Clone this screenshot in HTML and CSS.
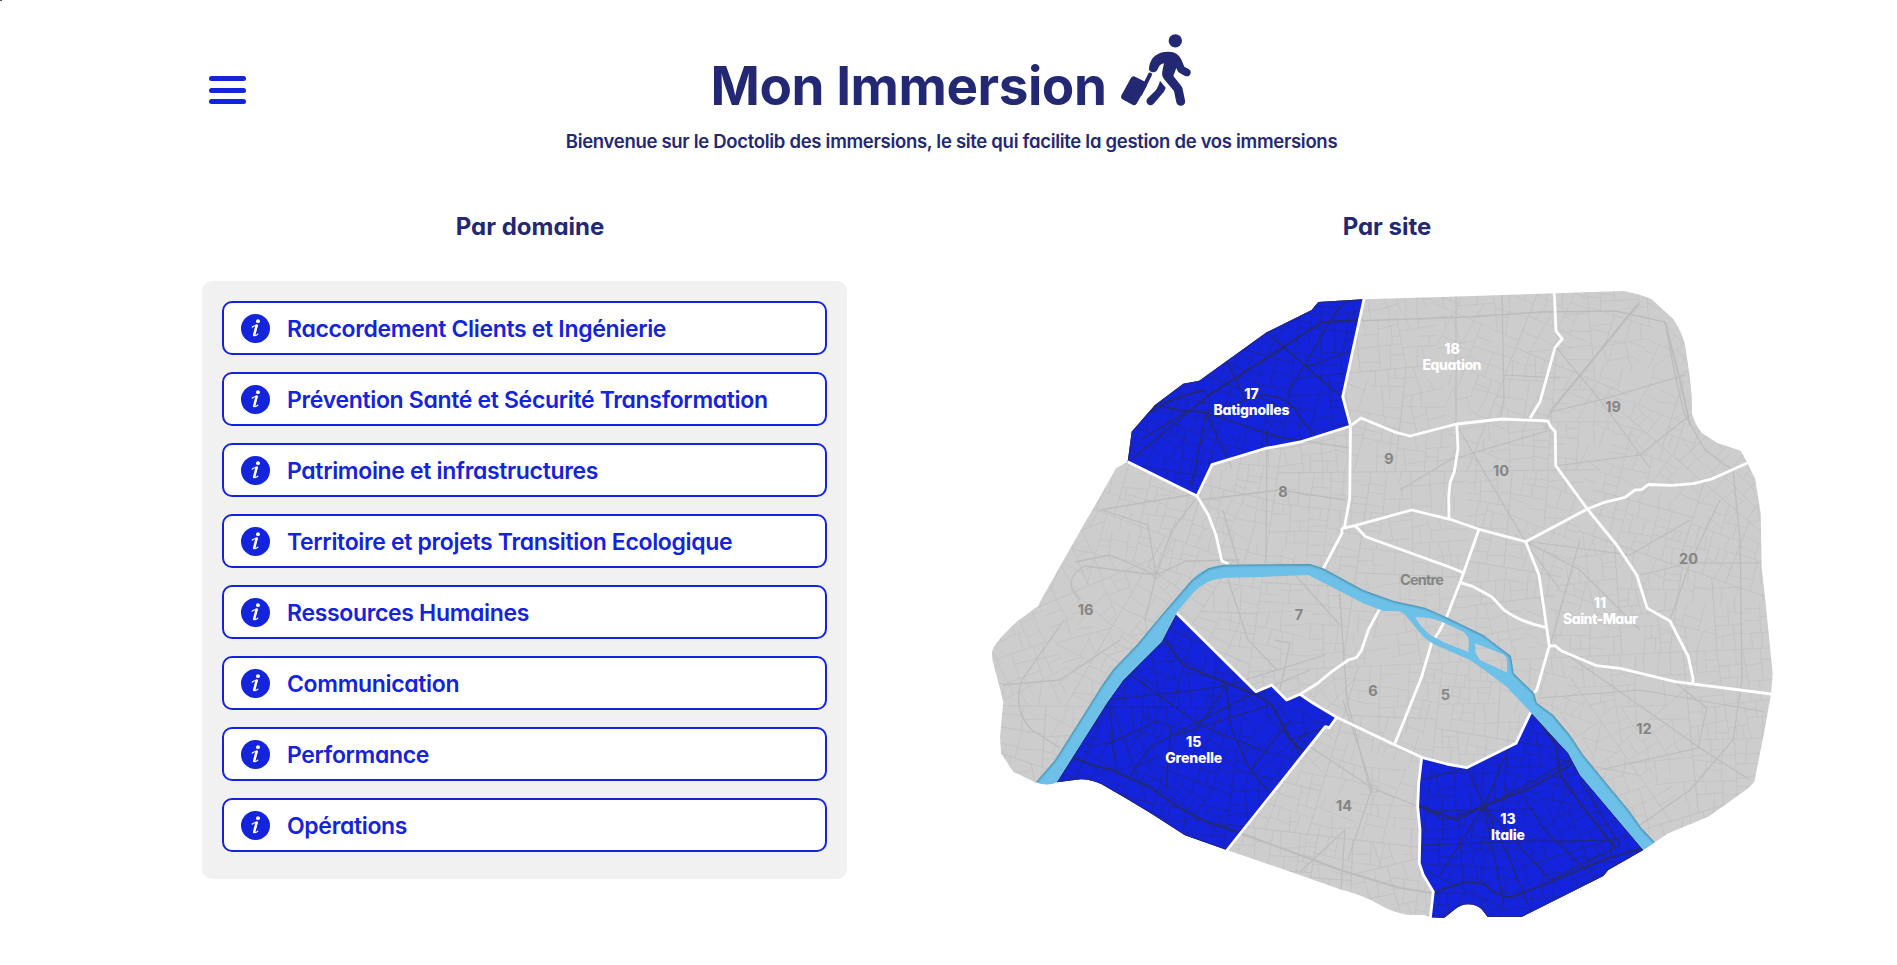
FILE: index.html
```html
<!DOCTYPE html>
<html lang="fr">
<head>
<meta charset="utf-8">
<title>Mon Immersion</title>
<link rel="stylesheet" href="styles.css">
</head>
<body>
<svg class="defs" width="0" height="0" aria-hidden="true">
  <symbol id="info" viewBox="0 0 28 28">
    <circle cx="14" cy="14" r="14" fill="#1423dc"/>
    <circle cx="16.400" cy="6.900" r="1.900" fill="#fff"/>
    <path d="M10.900 12.600Q13 10.900 15.800 10.700L13.100 19.200Q12.700 22.200 16.200 19.500" fill="none" stroke="#fff" stroke-width="1.200" stroke-linecap="round" stroke-linejoin="round"/>
    <path d="M15 11.400L12.700 20.300" stroke="#fff" stroke-width="2.400" stroke-linecap="round"/>
  </symbol>
</svg>
<span class="corner"></span>
<header class="header">
  <button class="burger" aria-label="Menu"><span></span><span></span><span></span></button>
  <div class="brand">
    <h1 class="title"><span class="title-text">Mon Immersion</span>
      <svg class="walker" viewBox="60 38 216 220" fill="#232873" stroke="#232873" stroke-linecap="round" stroke-linejoin="round">
        <circle cx="226" cy="61.500" r="20" stroke="none"/>
        <path d="M101 178L131 193L102 245L73 229Z" stroke-width="19"/>
        <path d="M150 163L121 221" fill="none" stroke-width="12"/>
        <path stroke="none" d="M147 143C150 112 172 94 204 94C226 94 238 103 245 120L253 139L266 146C273 150 274 157 270 163C266 169 260 169 254 166L239 158C235 156 232 151 229 143L220 167L241 193C246 199 248 204 249 211L255 240C257 249 253 254 245 256C237 257 231 254 229 246L222 212L195 180C187 171 185 164 187 153L192 129C181 131 177 137 173 147C170 155 163 157 155 155C149 153 146 149 147 143Z"/>
        <path stroke="none" d="M180 181L197 202C195 209 192 214 188 219L161 250C155 256 148 256 143 251C138 246 138 240 143 234L166 211C173 202 177 193 180 181Z"/>
      </svg>
    </h1>
    <p class="tagline">Bienvenue sur le Doctolib des immersions, le site qui facilite la gestion de vos immersions</p>
  </div>
</header>
<main class="columns">
  <section class="domains">
    <h2 class="heading">Par domaine</h2>
    <ul class="panel">
      <li class="item"><svg class="info"><use href="#info"/></svg><span>Raccordement Clients et Ingénierie</span></li>
      <li class="item"><svg class="info"><use href="#info"/></svg><span>Prévention Santé et Sécurité Transformation</span></li>
      <li class="item"><svg class="info"><use href="#info"/></svg><span>Patrimoine et infrastructures</span></li>
      <li class="item"><svg class="info"><use href="#info"/></svg><span>Territoire et projets Transition Ecologique</span></li>
      <li class="item"><svg class="info"><use href="#info"/></svg><span>Ressources Humaines</span></li>
      <li class="item"><svg class="info"><use href="#info"/></svg><span>Communication</span></li>
      <li class="item"><svg class="info"><use href="#info"/></svg><span>Performance</span></li>
      <li class="item"><svg class="info"><use href="#info"/></svg><span>Opérations</span></li>
    </ul>
  </section>
  <section class="sites">
    <h2 class="heading heading-site">Par site</h2>
    <svg class="map" viewBox="987 280 800 650">
      <defs>
        <path id="city" d="M1127.700 461.700L1131.700 431.700L1155 405L1183.300 383.700L1199.300 380.700L1226.700 361L1266.700 332.300L1311.700 310L1318.300 302L1363.300 299.300L1450 296.700L1555 293.300L1623.300 291Q1640 294 1651.700 299.300L1673.300 319Q1682 332 1685 345L1689.300 373.300L1691.700 395L1692 413.300Q1695 425 1701.700 432.700L1716.700 442.700L1740.700 450.700L1747.300 462.700L1755 478.300L1760.700 513.300L1761.700 568L1766 606.700L1770 646.700L1772.700 673.300L1771 694L1764 733.300L1754.300 781.700L1748.300 788.300L1708.300 816.700L1668.300 833.300L1643.300 850L1608.300 870L1603.300 876L1521.700 917L1487.700 917L1481.700 909.300Q1476 904.300 1468.300 904.300Q1461 904.300 1455 909.300L1444 918L1430.700 917.300L1424 915L1406.700 914.700Q1392 912 1380 905Q1363 895 1340 889.300L1293.300 872.700L1226.700 850L1185 835.300L1150 812.700L1123.300 796.700L1101.700 784.300Q1090 779 1080 779.300L1056.700 782.300Q1050 786 1036 782.700L1013.300 771.700L1001 753.300L1000 736.700L1003.300 701.700L996 673.300Q990 655 993 649Q996 641 1016.700 621.700L1038.300 606L1041 600L1075 540L1100 496.700L1116 468.300Z"/>
        <path id="offices" d="M1127.700 461.700L1131.700 431.700L1155 405L1183.300 383.700L1199.300 380.700L1226.700 361L1266.700 332.300L1311.700 310L1318.300 302L1363.300 299.300L1342.700 396.700L1350 426L1300 441.700L1265 448.300L1211.700 464.700L1197 495ZM1176.700 613.300L1256 691.700L1271.700 685L1286.700 700L1300 694.300L1336.700 717.300L1329.300 727.700L1325.300 726.700L1226.700 850L1185 835.300L1150 812.700L1123.300 796.700L1101.700 784.300Q1090 779 1080 779.300L1056.700 782.300L1106.700 703.300L1123.300 680L1161.700 641.700ZM1421.700 757.300L1446.700 764L1466.700 767.700L1516 743.300L1530.700 712.300L1568.300 753.300L1580 775L1643.300 850L1608.300 870L1603.300 876L1521.700 917L1487.700 917L1481.700 909.300Q1476 904.300 1468.300 904.300Q1461 904.300 1455 909.300L1444 918L1430.700 917.300L1433.300 891.700L1423.300 875L1419.300 863.300L1420 830L1417.700 806.700L1418.700 783.300Z"/>
        <path id="seine" fill-rule="evenodd" d="M1036 782L1055 760L1103.300 683.300L1113.300 669.300L1136.700 645L1160 616.700L1191.700 580Q1199 572 1208.300 568.300Q1217 564.700 1225 564.700L1310 564L1323.300 568.300L1363.300 590L1393.300 600.700L1425 607.700L1446.700 617.300L1483.300 635L1511 656L1513.700 673.300L1534.300 693.300L1536.700 702.700L1553.300 715L1570 735L1583.300 755L1630 811.700L1641.700 828.300L1655 842.300L1643.300 850L1580 775L1568.300 753.300L1530.700 712.300L1506.700 686.700L1486.700 671.700L1470 660L1433.300 644L1423.300 636.700L1406.700 616.700Q1402 611 1396.700 611.300L1383.300 611L1363.300 603.300L1308.300 575L1260 577L1228.300 577.700Q1218 578 1210 581Q1201 585 1193.300 592.700L1176 613.300L1161.700 641.700L1123.300 680L1106.700 703.300L1056.700 782.300Q1047 787 1036 782ZM1415 617.300Q1430 617 1441.700 621.700L1463.300 631.700Q1470 637 1468.700 645L1468.300 652L1445 642.700L1430 635L1421.700 626.700ZM1475 643.300L1503.300 654.300Q1507 657 1507 662L1507 672.500L1480 660L1475.700 653.300Z"/>
        <clipPath id="clip-city"><use href="#city"/></clipPath>
        <clipPath id="clip-offices"><use href="#offices"/></clipPath>
        <clipPath id="clip-seine"><path d="M1036 782L1055 760L1103.300 683.300L1113.300 669.300L1136.700 645L1160 616.700L1191.700 580L1208.300 568.300L1225 564.700L1310 564L1323.300 568.300L1363.300 590L1393.300 600.700L1425 607.700L1446.700 617.300L1483.300 635L1511 656L1513.700 673.300L1534.300 693.300L1536.700 702.700L1553.300 715L1570 735L1583.300 755L1630 811.700L1641.700 828.300L1655 842.300L1643.300 850L1506 690L1400 640L1310 590L1200 600L1060 790Z"/></clipPath>
        <filter id="soft" x="-10%" y="-10%" width="120%" height="120%"><feGaussianBlur stdDeviation="1.300"/></filter>
        <g id="streets" fill="none">
          <path id="lanes" stroke-width=".7" opacity=".7"/>
          <path id="roads" stroke-width=".9" opacity=".8"/>
          <path stroke-width="1.300" d="M1131 460L1206 397L1322 322L1470 317L1540 312L1615 311L1665 322L1674 370L1684 413L1705 450L1733 470L1740 540L1742 680L1733 740L1690 790L1640 825M1140 440L1206 400M1206 413L1279 437L1350 448M1206 413L1192 485M1206 413L1232 468M1206 413L1145 405M1206 413L1262 395Q1290 395 1300 418L1318 438M1228 364L1246 400L1206 413M1266 332L1345 400M1287 395L1335 313L1348 300M1307 367L1348 352M1156 575L1085 566Q1060 580 1080 600M1156 575L1172 530L1195 500M1156 575L1187 561L1240 560M1156 575L1110 555L1075 562M1156 575L1148 525L1102 510M1156 575L1145 620M1200 500L1280 490L1345 500M1267 430L1266 562M1223 510L1240 570M1100 510L1195 494M1064 620L1022 680Q1012 710 1032 730L1060 748M1003 685L1060 680L1120 640M1228 580L1248 640L1277 670M1340 593L1342 630L1347 700L1370 790M1295 575L1340 625M1275 640L1290 643L1280 690"/>
          <path stroke-width="1.200" d="M1109 700L1180 692L1226 686L1325 655M1109 700L1116 770M1132 676L1200 725L1262 750M1226 686L1232 730L1250 770L1268 791M1171 724L1166 790M1130 776L1150 747L1240 700L1310 670M1176 735L1270 705M1105 745L1160 720M1226 686L1195 732M1272 705L1300 755M1290 740L1326 727M1250 771L1290 720M1467 767L1484 806L1508 855L1528 905M1484 806L1530 783L1570 760M1484 806L1444 820L1420 806M1484 806L1440 875M1484 806L1510 745M1484 806L1550 880M1525 800L1545 830L1585 870M1424 845L1500 842L1620 840M1550 880L1620 845L1580 780M1420 780L1460 770M1484 806L1504 905M1456 290L1456 424M1502 295L1504 400L1500 419M1504 375L1560 378M1555 346L1600 400L1650 468M1545 430L1550 412L1600 400L1685 375M1457 426L1525 541M1400 490L1450 460L1550 430M1525 541L1580 570L1640 630M1525 541L1630 555L1690 520M1525 541L1560 590M1555 466L1640 455L1690 415M1640 575L1690 563L1760 563M1690 563L1720 500M1690 563L1670 620M1555 646L1700 748L1750 780M1550 646L1580 540M1540 698L1640 690L1765 712M1676 683L1707 708L1698 748L1600 770M1372 788L1440 815M1372 788L1343 700M1372 788L1348 860M1372 788L1300 740M1345 830L1300 872M1345 830L1341 890"/>
          <path stroke-width="2" d="M1062 748Q1075 762 1112 770L1150 787Q1180 810 1200 819L1240 833L1300 855L1340 870L1400 888L1433 893L1464 882L1485 884Q1495 897 1512 897L1545 884L1608 858L1643 848M1165 640L1183 665L1260 697L1272 705L1290 740L1305 752M1420 806L1456 820L1484 806L1530 788L1572 764M1535 716L1556 745L1560 775L1585 810L1615 847M1131 430Q1155 400 1206 390M1206 397L1322 322L1363 320M1639 303L1550 412M1665 322L1680 380L1690 425"/>
          <circle cx="1206" cy="413" r="3.500"/><circle cx="1156" cy="575" r="3.500"/><circle cx="1484" cy="806" r="3.500"/><circle cx="1374" cy="789" r="3.500"/>
        </g>
      </defs>
      <use href="#city" fill="#cdcdcd"/>
      <g clip-path="url(#clip-city)" stroke="#bcbcbc"><use href="#streets"/></g>
      <use href="#offices" fill="#1423dc"/>
      <g clip-path="url(#clip-offices)" stroke="#232873"><use href="#streets"/><use href="#offices" fill="none" stroke-width="1.800"/></g>
      <g class="borders">
        <path d="M1127.700 461.700L1197 496L1208.300 515L1216 535L1221.700 560.700L1228.300 564"/>
        <path d="M1364 299L1342.700 396.700L1350.500 426L1300 442L1265 448.500L1212 464.700L1197 496"/>
        <path d="M1350.500 426L1349.700 498.300L1344.300 528.300"/>
        <path d="M1341.700 528.300L1342 533L1323.300 568.700"/>
        <path d="M1341.700 528.300L1355 525.700L1411.700 510L1450 519.300L1479 529.300L1525.700 541.700L1566.700 520L1587.300 509L1603.300 502.700L1625 497.300L1635 490L1641.700 489.700L1648.300 484.500L1671.700 485.300L1693.300 483.700L1711.700 479L1748 462.700"/>
        <path d="M1355 525.700L1365.700 536.700L1450 567.300L1462.300 572.300"/>
        <path d="M1350.500 426L1361 418L1396.700 432.700L1410 436L1456.700 424L1501.700 419L1547.700 421L1550.700 426.700L1555.300 431.700L1555.700 465.700L1587.300 509L1616.700 545L1636.700 575L1647.300 608.300L1670 621L1688.300 656.700L1693 678.300L1692.700 683.300"/>
        <path d="M1554.300 293L1556 331L1562.300 339L1555 347.700L1540 401.700L1530 418.300"/>
        <path d="M1456.700 424L1458 448.300L1454.300 471.700L1450.300 481.700L1448.700 496.700L1449 518.300"/>
        <path d="M1479 529.300L1461 580L1446.700 616.700L1440 630L1431.700 642.700L1421.700 676.700L1398.300 735L1395 743.300"/>
        <path d="M1460.700 582.700L1473.300 586.700L1491.700 596.700L1503.300 609.300Q1520 622 1546.700 627.700"/>
        <path d="M1525.700 541.700L1539 575L1549.300 646L1536.700 690L1533 694"/>
        <path d="M1549.300 646L1555 645.700L1561.700 651L1596.700 665.700L1620 668.300L1675 681.700L1771 694"/>
        <path d="M1176.700 613.300L1256 691.700L1271.700 685L1286.700 700L1300 694.300L1313.300 703.300L1336.700 717.300L1395 745L1421.700 757.300L1446.700 764L1466.700 767.700L1516 743.300L1530.700 712.300"/>
        <path d="M1300 694.300L1316.700 684L1331.700 671.700L1348.300 660L1356.700 657.300L1361.700 650L1368.300 630L1380 608.300"/>
        <path d="M1336.700 717.300L1329.300 727.700L1325.300 726.700L1226.700 850.500"/>
        <path d="M1421.700 757.300L1418.700 783.300L1417.700 806.700L1420 830L1419.300 863.300L1423.300 875L1433.300 891.700L1430.300 918.300"/>
      </g>
      <use href="#seine" fill="#6dc1e8"/>
      <g clip-path="url(#clip-seine)"><path filter="url(#soft)" fill="none" stroke="#3d6f87" stroke-width="2" opacity=".8" d="M1036 782L1055 760L1103.300 683.300L1113.300 669.300L1136.700 645L1160 616.700L1191.700 580L1208.300 568.300L1225 564.700L1310 564L1323.300 568.300L1363.300 590L1393.300 600.700L1425 607.700L1446.700 617.300L1483.300 635L1511 656L1513.700 673.300L1534.300 693.300L1536.700 702.700L1553.300 715L1570 735L1583.300 755L1630 811.700L1641.700 828.300L1655 842.300"/></g>
      <g class="label label-muted">
        <text x="1613" y="412">19</text><text x="1501" y="475.500">10</text><text x="1688.500" y="563.500">20</text><text x="1389" y="464">9</text><text x="1283" y="497">8</text>
        <text x="1422" y="585.300" textLength="44">Centre</text><text x="1085.700" y="614.500">16</text><text x="1299" y="620">7</text><text x="1373" y="696">6</text><text x="1445.500" y="700">5</text><text x="1644" y="734">12</text><text x="1344" y="811">14</text>
      </g>
      <g class="label label-office">
        <text x="1251.500" y="398.500">17</text><text x="1251.500" y="414.500" textLength="76">Batignolles</text>
        <text x="1452" y="353.500">18</text><text x="1452" y="369.700" textLength="59">Equation</text>
        <text x="1600" y="607.500">11</text><text x="1600.500" y="623.800" textLength="75">Saint-Maur</text>
        <text x="1193.700" y="746.500">15</text><text x="1193.700" y="763" textLength="57">Grenelle</text>
        <text x="1508" y="824">13</text><text x="1508" y="840" textLength="34">Italie</text>
      </g>
    </svg>
  </section>
</main>
<script src="streets.js"></script>
</body>
</html>
```
FILE: styles.css
```css
* { box-sizing: border-box; }
body { margin: 0; background: #fff; color: #232873; font-family: Inter, "Open Sans", sans-serif; font-feature-settings: "cv11" 1; overflow: hidden; }
.defs { position: absolute; }
.corner { position: absolute; left: 0; top: 0; width: 2px; height: 1px; background: #555; }
.header { display: grid; grid-template-columns: 37px 1fr 37px; padding: 0 203px 0 209px; height: 214px; }
.burger { display: flex; flex-direction: column; gap: 6.500px; width: 37px; height: 29px; margin: 76px 0 0; padding: 0; border: 0; background: none; }
.burger span { height: 5px; border-radius: 3px; background: #1423dc; }
.brand { display: flex; flex-direction: column; align-items: center; }
.title { display: flex; align-items: flex-start; gap: 14px; margin: 0; padding-top: 33px; height: 125px; font-size: 53px; font-weight: 750; line-height: 64px; }
.title-text { margin-top: 21px; white-space: nowrap; letter-spacing: -0.45px; }
.walker { width: 72px; height: 73.300px; flex: none; }
.tagline { margin: 4px 0 0; font-size: 18.500px; font-weight: 560; line-height: 24px; white-space: nowrap; letter-spacing: -0.3px; }
.columns { display: flex; padding-left: 202px; gap: 140px; }
.domains { width: 645px; }
.sites { width: 800px; }
.heading { margin: 0; height: 67px; padding-left: 11px; text-align: center; font-size: 24px; font-weight: 720; line-height: 26px; letter-spacing: 0; }
.heading-site { height: 66px; padding-left: 0; }
.panel { display: flex; flex-direction: column; gap: 17px; margin: 0; padding: 20px 20px 27px; border-radius: 10px; background: #f1f1f1; list-style: none; }
.item { display: flex; align-items: center; gap: 17px; height: 54px; padding-left: 17px; border: 2px solid #1423dc; border-radius: 10px; background: #fff; color: #1423dc; font-size: 23px; font-weight: 560; letter-spacing: -0.33px; white-space: nowrap; }
.item span { padding-top: 2px; }
.info { width: 29px; height: 29px; flex: none; }
.map { display: block; width: 800px; height: 650px; }
.borders { fill: none; stroke: #fff; stroke-width: 2.800; stroke-linejoin: round; }
.label { font-size: 14px; font-weight: 800; text-anchor: middle; }
.label-muted { fill: #858585; font-weight: 700; font-size: 14.500px; }
.label-office { fill: #fff; }
```
FILE: streets.js
```js
// Street network: the plan is cut again and again into smaller blocks.
let seed = 20;
const rnd = () => (seed = (seed * 16807) % 2147483647) / 2147483647;
const lanes = [];
const roads = [];

function area(p) {
  let a = 0;
  p.forEach(([x, y], i) => {
    const [u, v] = p[(i + 1) % p.length];
    a += x * v - u * y;
  });
  return Math.abs(a / 2);
}

function cut(p, depth) {
  if (area(p) < 90 + rnd() * 360 || depth > 13) return;
  let best = 0, dx = 1, dy = 0;
  p.forEach(([x, y], i) => {
    const [u, v] = p[(i + 1) % p.length];
    const len = Math.hypot(u - x, v - y);
    if (len > best) { best = len; dx = (u - x) / len; dy = (v - y) / len; }
  });
  const turn = (rnd() - 0.5) * (depth < 6 ? 1.1 : 0.25);
  const nx = dx * Math.cos(turn) - dy * Math.sin(turn);
  const ny = dx * Math.sin(turn) + dy * Math.cos(turn);
  const d = p.map(([x, y]) => x * nx + y * ny);
  const lo = Math.min(...d), hi = Math.max(...d);
  const at = lo + (hi - lo) * (0.32 + rnd() * 0.36);
  const a = [], b = [], seg = [];
  p.forEach((pt, i) => {
    const j = (i + 1) % p.length;
    (d[i] < at ? a : b).push(pt);
    if ((d[i] < at) !== (d[j] < at)) {
      const t = (at - d[i]) / (d[j] - d[i]);
      const q = [pt[0] + (p[j][0] - pt[0]) * t, pt[1] + (p[j][1] - pt[1]) * t];
      a.push(q); b.push(q); seg.push(q);
    }
  });
  if (seg.length < 2) return;
  if (rnd() > 0.12) {
    const line = "M" + seg.map(q => q.map(n => n.toFixed(1)).join(" ")).join("L");
    (depth > 2 && depth < 7 ? roads : lanes).push(line);
  }
  cut(a, depth + 1);
  cut(b, depth + 1);
}

cut([[985, 285], [1780, 285], [1780, 925], [985, 925]], 0);
document.getElementById("lanes").setAttribute("d", lanes.join(""));
document.getElementById("roads").setAttribute("d", roads.join(""));
```
